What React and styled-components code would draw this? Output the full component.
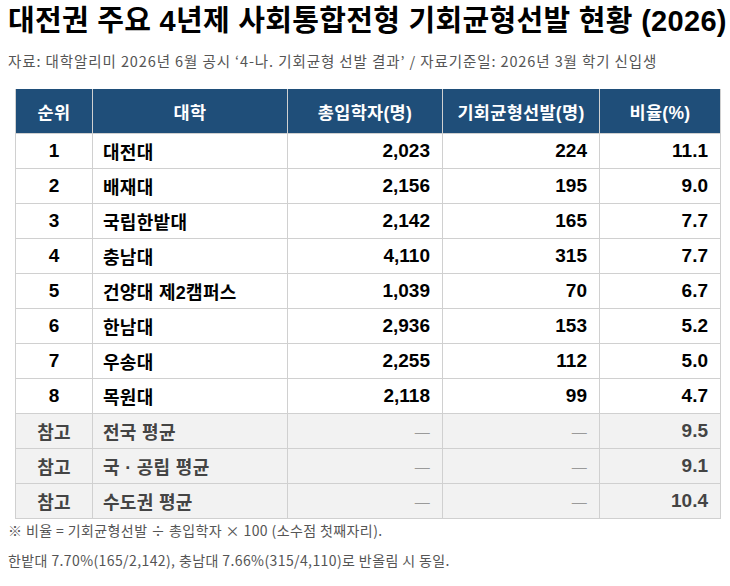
import React from "react";
import styled, { createGlobalStyle } from "styled-components";

const GlobalStyle = createGlobalStyle`
  html, body {
    margin: 0;
    padding: 0;
    background: #ffffff;
  }
  body {
    font-family: "Liberation Sans", "Noto Sans CJK KR", sans-serif;
    color: #111111;
  }
`;

const Page = styled.div`
  width: 730px;
  height: 586px;
  box-sizing: border-box;
  padding: 2px 8px 0 8px;
  overflow: hidden;
`;

const Title = styled.h1`
  margin: 0;
  font-family: "Liberation Sans", "Noto Sans CJK KR", sans-serif;
  font-size: 29px;
  font-weight: 700;
  line-height: 38px;
  letter-spacing: 0.3px;
  color: #000000;
  white-space: nowrap;
`;

const Source = styled.p`
  margin: 11px 0 0 0;
  font-family: "Noto Sans CJK KR", sans-serif;
  font-size: 14.5px;
  line-height: 20px;
  letter-spacing: 0.9px;
  color: #555555;
  white-space: nowrap;
`;

const Table = styled.table`
  margin: 18px 0 0 7px;
  width: 705px;
  border-collapse: collapse;
  table-layout: fixed;
`;

const Th = styled.th`
  height: 44px;
  padding: 0;
  background: #1f4e79;
  color: #ffffff;
  font-size: 17.5px;
  font-weight: 700;
  letter-spacing: 0.3px;
  text-align: center;
  border: 1px solid #d0d0d0;
  border-top: none;
`;

const Row = styled.tr`
  background: ${(p) => (p.$ref ? "#f2f2f2" : "#ffffff")};
  color: ${(p) => (p.$ref ? "#444444" : "#000000")};
`;

const Td = styled.td`
  height: 34px;
  padding: ${(p) => (p.$align === "left" ? "0 0 0 10px" : p.$align === "right" ? "0 12px 0 0" : "0")};
  text-align: ${(p) => p.$align || "center"};
  font-size: ${(p) => (p.$num ? "19px" : "18px")};
  font-weight: 700;
  letter-spacing: ${(p) => (p.$num ? "0" : "0.3px")};
  border: 1px solid #d0d0d0;
  white-space: nowrap;
`;

const Dash = styled.span`
  color: #9a9a9a;
  font-weight: 400;
  font-size: 15px;
`;

const Note = styled.p`
  margin: ${(p) => (p.$first ? "0" : "8px 0 0 0")};
  font-family: "Noto Sans CJK KR", sans-serif;
  font-size: 14px;
  line-height: 22px;
  letter-spacing: 0.4px;
  color: #555555;
  white-space: nowrap;
`;

const rows = [
  ["1", "대전대", "2,023", "224", "11.1"],
  ["2", "배재대", "2,156", "195", "9.0"],
  ["3", "국립한밭대", "2,142", "165", "7.7"],
  ["4", "충남대", "4,110", "315", "7.7"],
  ["5", "건양대 제2캠퍼스", "1,039", "70", "6.7"],
  ["6", "한남대", "2,936", "153", "5.2"],
  ["7", "우송대", "2,255", "112", "5.0"],
  ["8", "목원대", "2,118", "99", "4.7"],
];

const refs = [
  ["전국 평균", "9.5"],
  ["국 · 공립 평균", "9.1"],
  ["수도권 평균", "10.4"],
];

export default function App() {
  return (
    <Page>
      <GlobalStyle />
      <Title>대전권 주요 4년제 사회통합전형 기회균형선발 현황 (2026)</Title>
      <Source>
        자료: 대학알리미 2026년 6월 공시 ‘4-나. 기회균형 선발 결과’ / 자료기준일: 2026년 3월 학기 신입생
      </Source>
      <Table>
        <colgroup>
          <col style={{ width: 77 }} />
          <col style={{ width: 195 }} />
          <col style={{ width: 155 }} />
          <col style={{ width: 157 }} />
          <col style={{ width: 121 }} />
        </colgroup>
        <thead>
          <tr>
            <Th>순위</Th>
            <Th>대학</Th>
            <Th>총입학자(명)</Th>
            <Th>기회균형선발(명)</Th>
            <Th>비율(%)</Th>
          </tr>
        </thead>
        <tbody>
          {rows.map((r) => (
            <Row key={r[0]}>
              <Td $num>{r[0]}</Td>
              <Td $align="left">{r[1]}</Td>
              <Td $align="right" $num>{r[2]}</Td>
              <Td $align="right" $num>{r[3]}</Td>
              <Td $align="right" $num>{r[4]}</Td>
            </Row>
          ))}
          {refs.map((r) => (
            <Row key={r[0]} $ref>
              <Td>참고</Td>
              <Td $align="left">{r[0]}</Td>
              <Td $align="right"><Dash>—</Dash></Td>
              <Td $align="right"><Dash>—</Dash></Td>
              <Td $align="right" $num>{r[1]}</Td>
            </Row>
          ))}
        </tbody>
      </Table>
      <Note $first>※ 비율 = 기회균형선발 ÷ 총입학자 × 100 (소수점 첫째자리).</Note>
      <Note>한밭대 7.70%(165/2,142), 충남대 7.66%(315/4,110)로 반올림 시 동일.</Note>
    </Page>
  );
}
